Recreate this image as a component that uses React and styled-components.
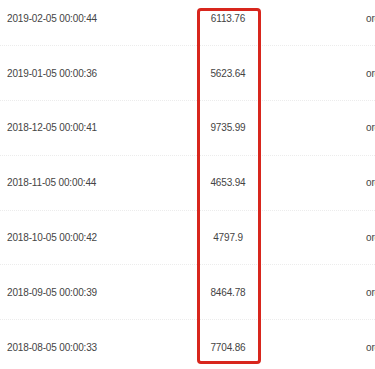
import React from 'react';
import styled, { createGlobalStyle } from 'styled-components';

const GlobalStyle = createGlobalStyle`
  html, body {
    margin: 0;
    padding: 0;
    background: #fff;
    overflow: hidden;
  }
  body {
    font-family: "Liberation Sans", Arial, Helvetica, sans-serif;
  }
`;

const Page = styled.div`
  position: relative;
  width: 375px;
  height: 369px;
  overflow: hidden;
`;

const Table = styled.div`
  margin-top: -8.5px;
`;

const Row = styled.div`
  display: grid;
  grid-template-columns: 198px 60px 1fr;
  align-items: center;
  height: 54.8px;
  border-bottom: 1px dotted #ececec;
  box-sizing: border-box;
  font-size: 10px;
  letter-spacing: -0.15px;
  color: #444;
`;

const Cell = styled.div`
  padding-left: ${(p) => p.$pad || 0}px;
  text-align: ${(p) => p.$align || 'left'};
  white-space: nowrap;
  overflow: hidden;
`;

const Highlight = styled.div`
  position: absolute;
  left: 197px;
  top: 8px;
  width: 64px;
  height: 356px;
  border: 3px solid #d8261d;
  border-radius: 4px;
  box-sizing: border-box;
  pointer-events: none;
`;

const rows = [
  ['2019-02-05 00:00:44', '6113.76'],
  ['2019-01-05 00:00:36', '5623.64'],
  ['2018-12-05 00:00:41', '9735.99'],
  ['2018-11-05 00:00:44', '4653.94'],
  ['2018-10-05 00:00:42', '4797.9'],
  ['2018-09-05 00:00:39', '8464.78'],
  ['2018-08-05 00:00:33', '7704.86'],
];

export default function App() {
  return (
    <Page>
      <GlobalStyle />
      <Table>
        {rows.map(([date, amount]) => (
          <Row key={date}>
            <Cell $pad={7}>{date}</Cell>
            <Cell $align="center">{amount}</Cell>
            <Cell $pad={108}>order</Cell>
          </Row>
        ))}
      </Table>
      <Highlight />
    </Page>
  );
}
